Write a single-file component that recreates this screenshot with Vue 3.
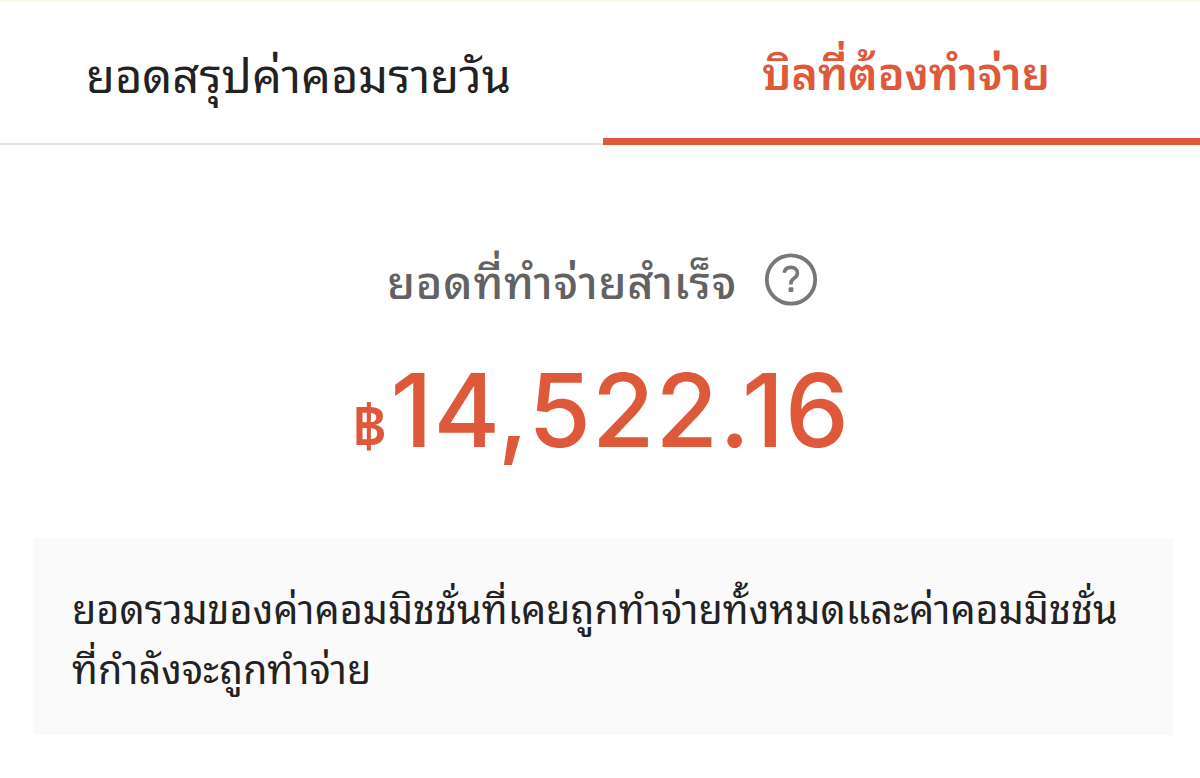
<template>
  <main class="page">
    <nav class="tabs">
      <button v-for="t in tabs" :key="t.id" class="tab" :class="{ active: t.id === current }" @click="current = t.id">{{ t.label }}</button>
    </nav>
    <section class="summary">
      <div class="label-row">
        <span class="label">ยอดที่ทำจ่ายสำเร็จ</span>
        <svg class="help" viewBox="0 0 54 54" fill="none">
          <circle cx="27" cy="27.5" r="24.2" stroke="#777" stroke-width="3.8" />
          <path d="M20.200 20.800c.4-3.300 2.900-5.400 6.600-5.400 3.900 0 6.600 2.200 6.600 5.500 0 2.500-1.100 3.900-3.300 5.400-2.400 1.600-3.200 2.700-3.200 5.300v.9" stroke="#777" stroke-width="3.6" />
          <rect x="24.600" y="35.300" width="4.800" height="4.600" rx="1.200" fill="#777" />
        </svg>
      </div>
      <p class="amount"><span class="currency">฿</span><span class="num">14,522.16</span></p>
    </section>
    <div class="note">
      <p>ยอดรวมของค่าคอมมิชชั่นที่เคยถูกทำจ่ายทั้งหมดและค่าคอมมิชชั่น<br>ที่กำลังจะถูกทำจ่าย</p>
    </div>
  </main>
</template>

<script setup>
import { ref } from 'vue'
const current = ref('bills')
const tabs = [
  { id: 'daily', label: 'ยอดสรุปค่าคอมรายวัน' },
  { id: 'bills', label: 'บิลที่ต้องทำจ่าย' },
]
</script>

<style>
body{margin:0;background:#fff}
</style>

<style scoped>
.page{width:1200px;height:778px;box-sizing:border-box;border-top:2px solid #fefae2;background:#fff;font-family:Thonburi,"Noto Sans Thai Looped",Loma,Garuda,Waree,"Noto Sans Thai","Noto Sans",sans-serif;color:#222;overflow:hidden}
.tabs{display:flex;height:143px}
.tab{width:603px;padding:0 6px 2px 0;border:0;border-bottom:2px solid #e5e5e5;background:none;font-family:inherit;font-size:47px;line-height:60px;font-weight:400;color:#222;white-space:nowrap}
.tab.active{width:597px;padding:0 0 1px 9px;border-bottom:7px solid #de593a;color:#de593a;font-size:44.7px;font-weight:600}
.summary{display:flex;flex-direction:column;align-items:center}
.label-row{display:flex;align-items:center;gap:27px;margin:107px 0 0 5px;height:54px}
.label{font-size:45px;line-height:54px;font-weight:500;letter-spacing:.8px;color:#626262}
.help{width:54px;height:54px}
.amount{display:flex;align-items:baseline;margin:39px 0 0 2px;height:133px;line-height:130px;color:#de593a}
.currency{font-size:60px;font-weight:600}
.num{margin-left:4px;font-family:Inter,sans-serif;font-size:101.5px;font-weight:500;letter-spacing:1px}
.note{margin:60px 27px 0 33px;height:197px;box-sizing:border-box;padding:39px 39px 0;background:#fafafa}
.note p{margin:0;font-size:39.6px;line-height:60px;white-space:nowrap}
</style>
